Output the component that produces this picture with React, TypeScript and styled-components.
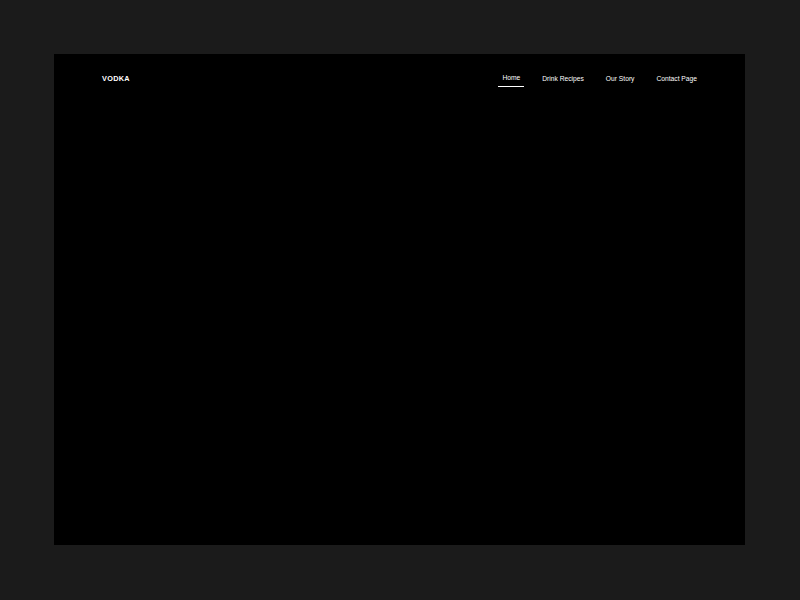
import styled, { createGlobalStyle } from "styled-components"

const GlobalStyle = createGlobalStyle`
	html, body {
		margin: 0;
		padding: 0;
		background: #1b1b1b;
		font-family: "Liberation Sans", Arial, sans-serif;
		-webkit-font-smoothing: antialiased;
	}
`

/*******************************************************/
const links = ["Home", "Drink Recipes", "Our Story", "Contact Page"]

export default function App() {
	return (
		<>
			<GlobalStyle />
			<Page>
				<Frame>
					<Header>
						<Logo>VODKA</Logo>
						<Nav>
							{links.map((label, i) => (
								<NavLink key={label} $active={i === 0}>
									{label}
								</NavLink>
							))}
						</Nav>
					</Header>
				</Frame>
			</Page>
		</>
	)
}

/*******************************************************/

const Page = styled.div`
	width: 800px;
	height: 600px;
	padding: 54px 55px 55px 54px;
	box-sizing: border-box;
	display: flex;
`

const Frame = styled.main`
	flex: 1;
	background: #000;
	display: flex;
	flex-direction: column;
`

const Header = styled.header`
	display: flex;
	align-items: center;
	justify-content: space-between;
	padding: 16px 48px 0 48px;
	height: 17px;
`

const Logo = styled.div`
	color: #fff;
	font-size: 7.3px;
	font-weight: 700;
	letter-spacing: 0.3px;
`

const Nav = styled.nav`
	display: flex;
	align-items: center;
	gap: 22px;
`

const NavLink = styled.a<{ $active?: boolean }>`
	position: relative;
	color: #fff;
	font-size: 6.7px;
	padding: 0 4px;
	margin: 0 -4px;
	transform: translateY(${(p) => (p.$active ? "-1px" : "0")});

	&::after {
		content: "";
		display: ${(p) => (p.$active ? "block" : "none")};
		position: absolute;
		left: 0;
		right: 0;
		bottom: -6px;
		height: 1px;
		background: #fff;
	}
`
